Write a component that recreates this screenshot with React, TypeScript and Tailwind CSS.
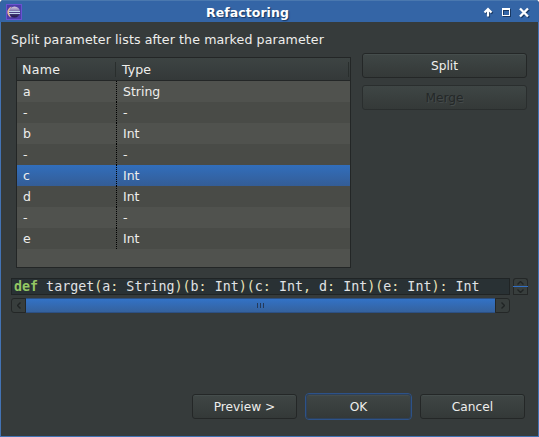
import type { ReactNode } from 'react';

const rows = [
  ['a', 'String'],
  ['-', '-'],
  ['b', 'Int'],
  ['-', '-'],
  ['c', 'Int'],
  ['d', 'Int'],
  ['-', '-'],
  ['e', 'Int'],
];

const signature = 'def target(a: String)(b: Int)(c: Int, d: Int)(e: Int): Int';

function Button({ children, className = '', disabled = false }: { children: ReactNode; className?: string; disabled?: boolean }) {
  const tone = disabled
    ? 'border-[#2a2e2e] text-[#242828] [text-shadow:1px_1px_0_#454b4b]'
    : 'text-[#eeeeec] shadow-[inset_0_1px_0_#454d4c]';
  return (
    <button disabled={disabled} className={`flex h-[25px] items-center justify-center rounded-[3px] bg-linear-to-b from-[#3f4645] to-[#343938] pt-px ${tone} ${className}`}>
      {children}
    </button>
  );
}

function TitleBar() {
  return (
    <header className="flex h-[22px] shrink-0 items-center border-t border-[#4a78af] bg-[#3465a6] pr-[8px] pl-[6px]">
      <svg width="16" height="16" viewBox="0 0 16 16" className="shrink-0">
        <defs>
          <linearGradient id="planet" x2="0" y2="1">
            <stop stopColor="#d6cde2" />
            <stop offset=".35" stopColor="#8a80b4" />
            <stop offset=".5" stopColor="#51458b" />
            <stop offset="1" stopColor="#211844" />
          </linearGradient>
        </defs>
        <rect x=".5" y=".5" width="15" height="15" fill="#4f3ca8" stroke="#6953d0" />
        <path d="M5.500 2.500C0 5 0 11 5 13.500C3 10 3 6 5.500 2.500Z" fill="#e8b79a" />
        <circle cx="8.500" cy="8" r="5.500" fill="url(#planet)" />
        <path d="M3 7.500h11M3 9.500h11" stroke="#c3d5ee" />
      </svg>
      <h1 className="flex-1 pt-[2px] pr-[58px] text-center text-[12.500px] leading-[20px] font-bold tracking-[0.050px] text-white [text-shadow:1px_1px_1px_#183761]">Refactoring</h1>
      <svg width="48" height="12" viewBox="0 0 48 12" fill="none" className="mt-[3px] -ml-[48px] shrink-0 [filter:drop-shadow(1px_1px_0_#183761)]">
        <path d="M5 9.500V3M1.500 5.500L5 2L8.500 5.500" stroke="white" strokeWidth="2.200" />
        <rect x="19.500" y="1.500" width="7" height="7" stroke="white" />
        <path d="M19 2h8" stroke="white" strokeWidth="2" />
        <path d="M37 1.500L45 9.500M45 1.500L37 9.500" stroke="white" strokeWidth="2.400" />
      </svg>
    </header>
  );
}

function ParameterTable() {
  return (
    <div className="h-[211px] w-[335px] border border-[#232626] bg-[#50524e] text-[#eeeeec]">
      <div className="flex h-[23px] border-b border-[#242727] bg-linear-to-b from-[#3d4443] to-[#343939] pt-px leading-[22px]">
        <div className="relative w-[99px] pl-[5px] text-[12.600px] tracking-[0.300px]">
          Name
          <i className="absolute top-[3px] right-0 h-[15px] w-px bg-[#292e2d]" />
        </div>
        <div className="relative flex-1 pl-[6px] text-[12.600px]">
          Type
          <i className="absolute top-[3px] right-px h-[15px] w-px bg-[#292e2d]" />
        </div>
      </div>
      {rows.map(([name, type], i) => (
        <div key={i} className={`flex h-[21px] text-[12.500px] leading-[22px] ${i === 4 ? 'bg-linear-to-b from-[#316ebc] to-[#345d96]' : i % 2 ? 'bg-[#494b47]' : 'bg-[#50524e]'}`}>
          <div className="w-[99px] pl-[6px]">{name}</div>
          <div className="flex-1 bg-[repeating-linear-gradient(to_bottom,#000_0px,#000_1px,transparent_1px,transparent_2px)] bg-[length:1px_100%] bg-no-repeat pl-[7px]">{type}</div>
        </div>
      ))}
    </div>
  );
}

function Chevron({ d, w, h }: { d: string; w: number; h: number }) {
  return (
    <svg width={w} height={h} viewBox={`0 0 ${w} ${h}`} fill="none" className="shrink-0">
      <path d={d} stroke="#202424" strokeWidth="1.400" />
    </svg>
  );
}

function SignaturePreview() {
  const step = 'flex shrink-0 items-center justify-center border-[#242727] bg-[#383e3d]';
  return (
    <section className="mt-[10px] ml-[10px]">
      <div className="flex gap-[3px]">
        <pre className="h-[17px] w-[499px] border border-[#202425] bg-[#293134] pl-[2px] font-['DejaVu_Sans_Mono',monospace] text-[13.330px] leading-[16px] text-[#e0e2e4]">
          <b className="text-[#93c763]">def</b>
          {signature.slice(3).split(/([():,])/).map((part, i) => (
            <span key={i} className={i % 2 ? 'text-[#e8e2b7]' : ''}>{part}</span>
          ))}
        </pre>
        <div className="flex w-[15px] flex-col">
          <div className={`h-[8px] rounded-t-[3px] border-x border-t ${step}`}><Chevron w={7} h={4} d="M.5 3.500L3.500 .5L6.500 3.500" /></div>
          <div className="h-px bg-[#3370c4]" />
          <div className={`h-[8px] rounded-b-[1px] border-x border-b ${step}`}><Chevron w={7} h={4} d="M.5 .5L3.500 3.500L6.500 .5" /></div>
        </div>
      </div>
      <div className="mt-[3px] flex h-[15px] w-[499px]">
        <div className={`w-[15px] rounded-l-[3px] border ${step}`}><Chevron w={4} h={7} d="M3.500 .5L.5 3.500L3.500 6.500" /></div>
        <div className="flex flex-1 items-center justify-center gap-[2px] border-y border-[#2c5084] bg-linear-to-b from-[#3272c6] to-[#35629e]">
          <i className="h-[5px] w-px bg-[#24395a]" />
          <i className="h-[5px] w-px bg-[#24395a]" />
          <i className="h-[5px] w-px bg-[#24395a]" />
        </div>
        <div className={`w-[15px] rounded-r-[3px] border ${step}`}><Chevron w={4} h={7} d="M.5 .5L3.500 3.500L.5 6.500" /></div>
      </div>
    </section>
  );
}

export default function App() {
  return (
    <div className="h-[437px] w-[539px] bg-white font-['DejaVu_Sans',sans-serif] text-[12.200px]">
      <div className="flex h-full flex-col overflow-hidden rounded-t-[4px] bg-[#363b3b]">
        <TitleBar />
        <main className="flex-1 border-x border-b border-[#4373b4]">
          <p className="mt-[9px] ml-[10px] h-[18px] text-[12.600px] leading-[18px] tracking-[0.100px] text-[#eeeeec]">Split parameter lists after the marked parameter</p>
          <div className="flex">
            <div className="mt-[8px] ml-[15px]"><ParameterTable /></div>
            <div className="mt-[4px] ml-[11px] flex flex-col gap-[7px]">
              <Button className="w-[165px] border border-[#242727]">Split</Button>
              <Button disabled className="w-[165px] border">Merge</Button>
            </div>
          </div>
          <SignaturePreview />
          <footer className="mt-[80px] mr-[13px] flex items-center justify-end gap-[8px]">
            <Button className="w-[105px] border border-[#242727]">Preview &gt;</Button>
            <div className="rounded-[4px] border border-[#2d5288]">
              <Button className="w-[105px] border border-[#2d4059]">OK</Button>
            </div>
            <Button className="w-[105px] border border-[#242727]">Cancel</Button>
          </footer>
        </main>
      </div>
    </div>
  );
}
